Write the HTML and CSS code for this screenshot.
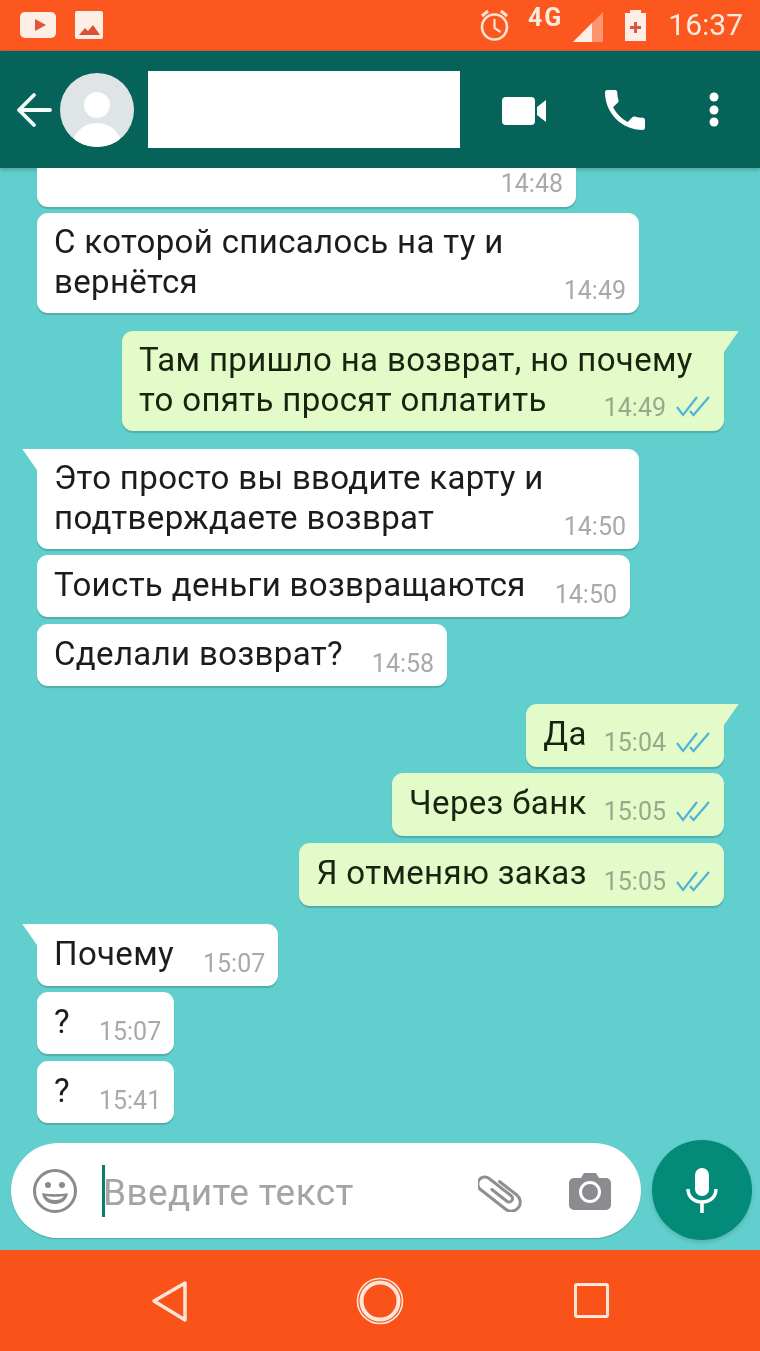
FILE: index.html
```html
<!DOCTYPE html>
<html lang="ru">
<head>
  <meta charset="UTF-8">
  <title>Чат</title>
  <link rel="stylesheet" href="styles.css">
</head>
<body>
  <div class="phone">
    <!-- статус-бар -->
    <div class="status-bar">
      <svg class="st-yt" viewBox="20 0 36 50"><rect x="20" y="12" width="36" height="26" rx="5" fill="#fdeee6"/><path d="M35 19l11 6-11 6z" fill="#e2553a"/></svg>
      <svg class="st-img" viewBox="75 0 28 50"><rect x="75" y="11" width="28" height="28" rx="2" fill="#fdeee6"/><path d="M79 35l6-7 3 3 5-6 7 10z" fill="#dd5036"/></svg>
      <div class="st-spacer"></div>
      <svg class="st-alarm" viewBox="476 0 34 50" fill="none" stroke="#fde3d3"><circle cx="492.5" cy="27" r="12.5" stroke-width="2.6"/><path d="M492.5 19v9l6 4" stroke-width="2.2"/><path d="M480 16l6-5M505 16l-6-5" stroke-width="3"/></svg>
      <span class="st-net">4G</span>
      <svg class="st-signal" viewBox="573 0 30 50"><path d="M573 42l30-30v30z" fill="#fde3d3" opacity=".45"/><path d="M573 42l19-19v19z" fill="#fdeee6"/></svg>
      <svg class="st-batt" viewBox="626 0 22 50"><path d="M631 10h11v3h5v28h-21v-28h5z" fill="#fdeee6"/><path d="M635 22h3v4h4v3h-4v4h-3v-4h-4v-3h4z" fill="#d9573a"/></svg>
      <span class="st-time">16:37</span>
    </div>

    <!-- шапка чата -->
    <div class="chat-head">
      <svg class="ic-back" viewBox="0 0 40 117" fill="none" stroke="#f2fbf9" stroke-width="3.8" stroke-linecap="round" stroke-linejoin="round"><path d="M35 59h-31M19 44l-15 15 15 15"/></svg>
      <svg class="avatar" viewBox="0 0 74 74"><defs><clipPath id="av"><circle cx="37" cy="37" r="37"/></clipPath></defs><circle cx="37" cy="37" r="37" fill="#dfe4e7"/><circle cx="37" cy="32" r="13" fill="#fff"/><ellipse cx="37" cy="74" rx="25" ry="24" fill="#fff" clip-path="url(#av)"/></svg>
      <div class="contact-name"></div>
      <svg class="ic-video" viewBox="0 0 46 117" fill="#fff"><rect x="1" y="46" width="33" height="28" rx="4"/><path d="M36 56l9-7v22l-9-7z"/></svg>
      <svg class="ic-call" viewBox="3 3 18 18" fill="#fff"><path d="M6.62 10.79c1.44 2.83 3.76 5.14 6.59 6.59l2.2-2.2c.27-.27.67-.36 1.02-.24 1.12.37 2.33.57 3.57.57.55 0 1 .45 1 1V20c0 .55-.45 1-1 1-9.39 0-17-7.61-17-17 0-.55.45-1 1-1h3.5c.55 0 1 .45 1 1 0 1.25.2 2.45.57 3.57.11.35.03.74-.25 1.02l-2.2 2.2z"/></svg>
      <svg class="ic-more" viewBox="0 0 10 117" fill="#fff"><circle cx="5" cy="46" r="4.5"/><circle cx="5" cy="59" r="4.5"/><circle cx="5" cy="71" r="4.5"/></svg>
    </div>

    <!-- сообщения -->
    <div class="messages">
      <div class="bubble in cut"><span class="time">14:48</span></div>
      <div class="bubble in w602 near">
        <p class="text">С которой списалось на ту и<br>вернётся</p>
        <span class="time">14:49</span>
      </div>

      <div class="bubble out w602 tail">
        <p class="text">Там пришло на возврат, но почему<br>то опять просят оплатить</p>
        <span class="time">14:49</span>
        <svg class="ticks" viewBox="0 0 34 21" fill="none" stroke="#52b2d6" stroke-width="2.2"><path d="M1 11l6 8L21 1M14 15l3.500 4L33 1"/></svg>
      </div>

      <div class="bubble in w602 tail">
        <p class="text">Это просто вы вводите карту и<br>подтверждаете возврат</p>
        <span class="time">14:50</span>
      </div>
      <div class="bubble in near">
        <p class="text">Тоисть деньги возвращаются</p>
        <span class="time">14:50</span>
      </div>
      <div class="bubble in near">
        <p class="text">Сделали возврат?</p>
        <span class="time">14:58</span>
      </div>

      <div class="bubble out tail">
        <p class="text">Да</p>
        <span class="time">15:04</span>
        <svg class="ticks" viewBox="0 0 34 21" fill="none" stroke="#52b2d6" stroke-width="2.2"><path d="M1 11l6 8L21 1M14 15l3.500 4L33 1"/></svg>
      </div>
      <div class="bubble out near">
        <p class="text">Через банк</p>
        <span class="time">15:05</span>
        <svg class="ticks" viewBox="0 0 34 21" fill="none" stroke="#52b2d6" stroke-width="2.2"><path d="M1 11l6 8L21 1M14 15l3.500 4L33 1"/></svg>
      </div>
      <div class="bubble out near">
        <p class="text">Я отменяю заказ</p>
        <span class="time">15:05</span>
        <svg class="ticks" viewBox="0 0 34 21" fill="none" stroke="#52b2d6" stroke-width="2.2"><path d="M1 11l6 8L21 1M14 15l3.500 4L33 1"/></svg>
      </div>

      <div class="bubble in tail">
        <p class="text">Почему</p>
        <span class="time">15:07</span>
      </div>
      <div class="bubble in near">
        <p class="text">?</p>
        <span class="time">15:07</span>
      </div>
      <div class="bubble in near">
        <p class="text">?</p>
        <span class="time">15:41</span>
      </div>
    </div>

    <!-- поле ввода -->
    <div class="composer">
      <div class="input-pill">
        <svg class="ic-emoji" viewBox="0 0 46 46"><circle cx="23" cy="23" r="20.5" fill="none" stroke="#8b8b8b" stroke-width="3"/><circle cx="16" cy="17" r="3" fill="#8b8b8b"/><circle cx="30" cy="17" r="3" fill="#8b8b8b"/><path d="M10 25c4 1.500 22 1.500 26 0-1 7-6 11-13 11s-12-4-13-11z" fill="#8b8b8b"/><path d="M14 28c5 1 13 1 18 0-2 3-5 4-9 4s-7-1-9-4z" fill="#fff"/></svg>
        <div class="caret"></div>
        <span class="placeholder">Введите текст</span>
        <svg class="ic-clip" viewBox="0 0 46 40" fill="none" stroke="#8f8f8f" stroke-width="3" stroke-linecap="round"><g transform="translate(7 2) rotate(38)"><path d="M16 -3L38 -3A9 9 0 0 1 38 15L6 15A7 7 0 0 1 6 1L34 1A3.500 3.500 0 0 1 34 8L15 8"/></g></svg>
        <svg class="ic-camera" viewBox="0 0 42 40"><path d="M5 7h7l3-5h12l3 5h7a5 5 0 0 1 5 5v22a5 5 0 0 1-5 5H5a5 5 0 0 1-5-5V12a5 5 0 0 1 5-5z" fill="#8a8c8f"/><circle cx="21" cy="21" r="9.500" fill="#8a8c8f" stroke="#fff" stroke-width="3"/></svg>
      </div>
      <div class="mic-btn">
        <svg class="ic-mic" viewBox="0 0 32 46" fill="none" stroke="#fff"><rect x="9" y="0" width="14" height="28" rx="7" fill="#fff" stroke="none"/><path d="M2 21c0 8 6 13 14 13s14-5 14-13" stroke-width="3.400"/><path d="M16 33v12" stroke-width="3.600"/></svg>
      </div>
    </div>

    <!-- навигация -->
    <div class="nav-bar">
      <svg class="nav-back" viewBox="0 0 38 42" fill="none" stroke="#fde6d8" stroke-width="3.500" stroke-linejoin="round"><path d="M3 21L34 3v37z"/></svg>
      <svg class="nav-home" viewBox="0 0 48 48" fill="none" stroke="#fde6d8"><circle cx="24" cy="24" r="22.500" stroke-width="1.600"/><circle cx="24" cy="24" r="18.500" stroke-width="4"/></svg>
      <div class="nav-recent"></div>
    </div>
  </div>
</body>
</html>
```

FILE: styles.css
```css
* {
  box-sizing: border-box;
}
body {
  margin: 0;
  font-family: Roboto, "Noto Sans", sans-serif;
}
.phone {
  width: 760px;
  height: 1351px;
  display: flex;
  flex-direction: column;
  background: #61cfcd;
  overflow: hidden;
  filter: blur(.35px); /* исходник — мягкий скриншот */
}

/* статус-бар */
.status-bar {
  height: 51px;
  flex-shrink: 0;
  display: flex;
  align-items: center;
  background: #fb571f;
  border-bottom: 1px solid #c9603c;
  padding: 0 17px 1px 20px;
  color: #fdeadf;
}
.status-bar svg {
  height: 50px;
  display: block;
}
.st-yt { width: 36px; }
.st-img { width: 28px; margin-left: 19px; }
.st-spacer { flex: 1; }
.st-alarm { width: 34px; margin-right: -1px; }
.st-net {
  font-size: 25px;
  font-weight: 700;
  line-height: 24px;
  letter-spacing: 2px;
  margin: 0 0 14px 17px;
}
.st-signal { width: 30px; margin-left: 10px; }
.st-batt { width: 22px; margin-left: 22px; }
.st-time {
  font-size: 30px;
  line-height: 34px;
  margin-left: 21px;
}

/* шапка */
.chat-head {
  height: 117px;
  flex-shrink: 0;
  display: flex;
  align-items: center;
  background: #06635a;
  padding-left: 15px;
  position: relative;
  box-shadow: 0 2px 4px rgba(0, 0, 0, .2);
}
.ic-back { width: 40px; height: 117px; }
.avatar { width: 74px; height: 74px; margin: 0 0 0 5px; }
.contact-name {
  width: 312px;
  height: 77px;
  background: #fff;
  margin-left: 14px;
  margin-top: -1px;
}
.ic-video { width: 46px; height: 117px; margin-left: 41px; }
.ic-call { width: 40px; height: 40px; margin-left: 58px; }
.ic-more { width: 10px; height: 117px; margin-left: 64px; }

/* сообщения */
.messages {
  flex: 1;
  display: flex;
  flex-direction: column;
  min-height: 0;
  padding: 0 36px 0 37px;
}
.bubble {
  position: relative;
  display: flex;
  align-items: flex-end;
  align-self: flex-start;
  padding: 10px 13px 12px 17px;
  margin-top: 18px;
  background: #fff;
  border-radius: 11px;
  box-shadow: 0 2px 1px rgba(0, 0, 0, .16);
}
.bubble.out {
  align-self: flex-end;
  background: #e3fbc9;
  padding: 10px 14px 13px 17px;
}
.bubble.near { margin-top: 6.5px; }
.bubble.w602,
.bubble.out.w602 {
  width: 602px;
  padding-top: 9px;
  padding-bottom: 11px;
}
.bubble.cut {
  width: 539px;
  height: 39px;
  margin: 0 0 -1px;
  padding: 0 13px 11px 0;
  justify-content: flex-end;
  border-radius: 0 0 11px 11px;
}
.bubble.tail.in { border-top-left-radius: 0; }
.bubble.tail.out { border-top-right-radius: 0; }
.bubble.tail::before {
  content: "";
  position: absolute;
  top: 0;
  width: 16px;
  height: 23px;
  background: inherit;
}
.bubble.tail.in::before {
  left: -15px;
  clip-path: polygon(0 0, 100% 0, 100% 100%);
}
.bubble.tail.out::before {
  right: -15px;
  clip-path: polygon(0 0, 100% 0, 0 100%);
}
.text {
  margin: 0;
  flex: 1;
  min-width: 0;
  font-size: 33px;
  line-height: 40px;
  letter-spacing: .35px;
  color: #1c1c1c;
  white-space: nowrap;
}
.out .text { color: #18240f; }
.time {
  flex-shrink: 0;
  font-size: 25px;
  line-height: 24px;
  color: #a9a9a9;
  margin: 0 0 -2px 29px;
  white-space: nowrap;
}
.out .time {
  color: #97a98b;
  margin: 0 0 -1px 17px;
}
.cut .time { margin-bottom: 0; }
.w602 .time { margin-bottom: -1px; }
.out.w602 .time { margin-bottom: 0; }
.ticks {
  flex-shrink: 0;
  width: 34px;
  height: 21px;
  margin: 0 0 1px 10px;
}
.out.w602 .ticks { margin-bottom: 3px; }

/* поле ввода */
.composer {
  height: 110px;
  flex-shrink: 0;
  display: flex;
  align-items: flex-start;
  padding-left: 11px;
}
.input-pill {
  width: 630px;
  height: 95px;
  margin-top: 3px;
  display: flex;
  align-items: center;
  background: #fff;
  border-radius: 48px;
  box-shadow: 0 1px 1px rgba(0, 0, 0, .2);
}
.ic-emoji { width: 46px; height: 46px; margin-left: 21px; }
.caret {
  width: 3px;
  height: 52px;
  margin-left: 24px;
  background: #0c7d6e;
}
.placeholder {
  flex: 1;
  font-size: 37px;
  letter-spacing: .4px;
  color: #a4a4a4;
  margin: 4px 0 0 -2px;
}
.ic-clip { width: 46px; height: 40px; margin-top: 2px; }
.ic-camera { width: 42px; height: 40px; margin: 0 30px 0 45px; }
.mic-btn {
  width: 100px;
  height: 100px;
  margin-left: 11px;
  display: flex;
  align-items: center;
  justify-content: center;
  background: #048a79;
  border-radius: 50%;
  box-shadow: 0 2px 4px rgba(0, 0, 0, .15);
}
.ic-mic { width: 32px; height: 46px; margin-top: 2px; }

/* навигация */
.nav-bar {
  height: 101px;
  flex-shrink: 0;
  display: flex;
  align-items: center;
  background: #f9531a;
  padding-left: 151px;
}
.nav-back { width: 38px; height: 42px; }
.nav-home { width: 48px; height: 48px; margin-left: 167px; }
.nav-recent {
  width: 35px;
  height: 35px;
  margin-left: 170px;
  border: 3.5px solid #fde6d8;
  border-radius: 3px;
}
```
